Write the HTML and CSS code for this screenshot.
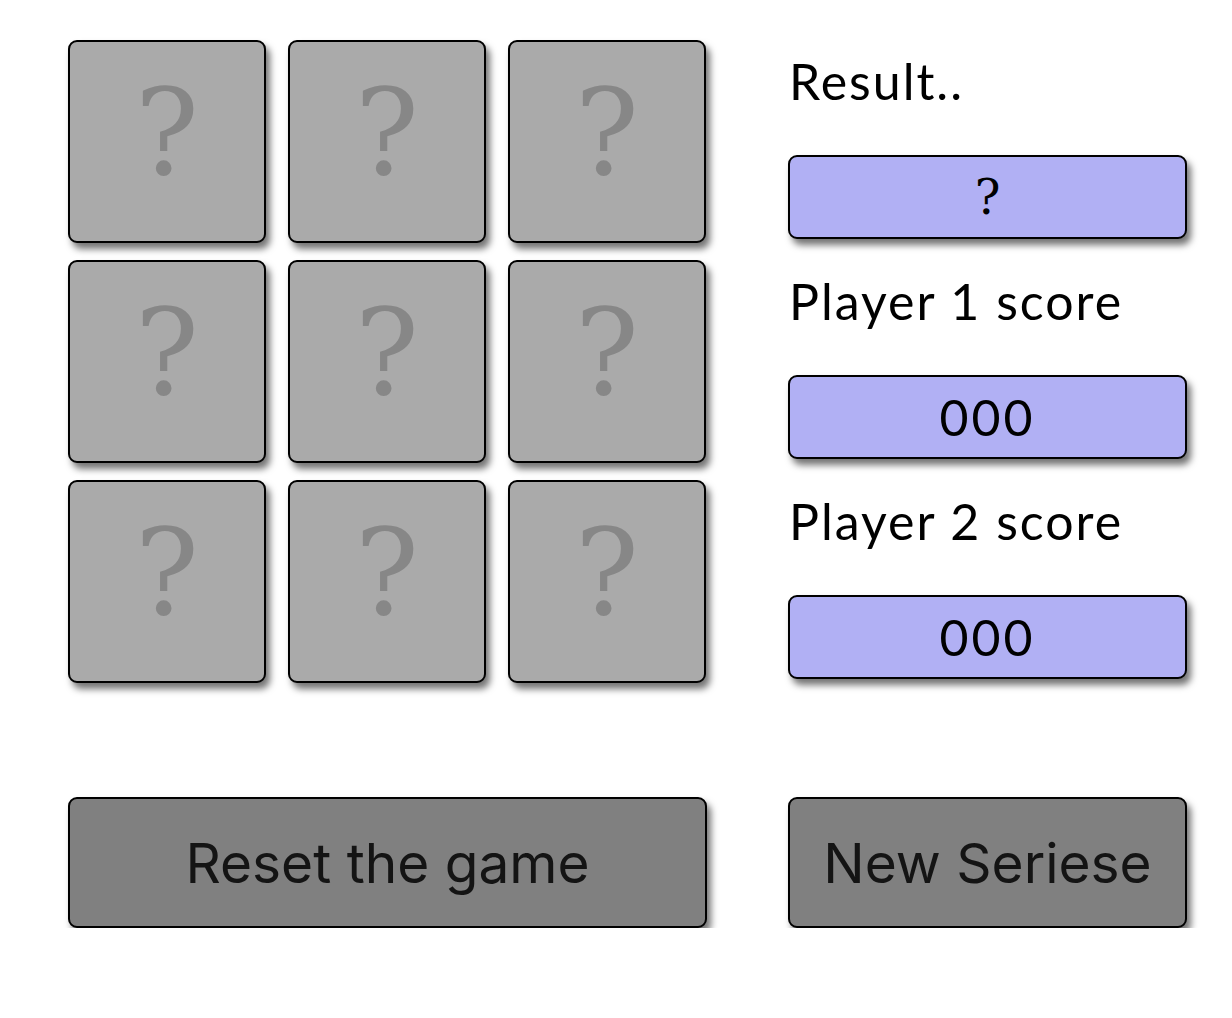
FILE: index.html
```html
<!DOCTYPE html>
<html>
<head>
<meta charset="utf-8">
<link rel="stylesheet" href="styles.css">
</head>
<body>
<div class="page">
  <div class="board">
    <div class="cell">?</div>
    <div class="cell">?</div>
    <div class="cell">?</div>
    <div class="cell">?</div>
    <div class="cell">?</div>
    <div class="cell">?</div>
    <div class="cell">?</div>
    <div class="cell">?</div>
    <div class="cell">?</div>
  </div>
  <div class="side">
    <div class="group">
      <div class="label">Result..</div>
      <div class="box result">?</div>
    </div>
    <div class="group">
      <div class="label">Player 1 score</div>
      <div class="box score">000</div>
    </div>
    <div class="group">
      <div class="label">Player 2 score</div>
      <div class="box score">000</div>
    </div>
  </div>
  <button class="btn reset">Reset the game</button>
  <button class="btn series">New Seriese</button>
</div>
</body>
</html>
```
FILE: styles.css
```css
html, body {
  margin: 0;
  padding: 0;
  background: #ffffff;
}

.page {
  display: grid;
  grid-template-columns: 640px 400px;
  column-gap: 80px;
  row-gap: 114px;
  padding: 40px 0 0 68px;
  align-items: start;
}

.board {
  display: grid;
  grid-template-columns: repeat(3, 198px);
  grid-auto-rows: 203px;
  column-gap: 22px;
  row-gap: 17px;
}

.cell {
  box-sizing: border-box;
  background: #aaaaaa;
  border: 2px solid #000;
  border-radius: 9px;
  box-shadow: 4px 6px 7px rgba(0, 0, 0, 0.55);
  color: #878787;
  font-family: "DejaVu Serif", serif;
  font-size: 120px;
  line-height: 1;
  display: flex;
  align-items: center;
  justify-content: center;
  padding-bottom: 18px;
}

.side {
  display: flex;
  flex-direction: column;
  gap: 21px;
}

.group {
  display: flex;
  flex-direction: column;
}

.label {
  height: 115px;
  box-sizing: border-box;
  padding-top: 13px;
  padding-left: 1px;
  font-family: Lato, "Noto Sans", sans-serif;
  font-size: 50px;
  letter-spacing: 2px;
  line-height: 57px;
  color: #000;
}

.box {
  box-sizing: border-box;
  width: 399px;
  height: 84px;
  background: #b1b0f4;
  border: 2px solid #000;
  border-radius: 9px;
  box-shadow: 4px 6px 7px rgba(0, 0, 0, 0.55);
  display: flex;
  align-items: center;
  justify-content: center;
  color: #000;
}

.result {
  font-family: "DejaVu Serif", serif;
  font-size: 48px;
}

.score {
  font-family: Lato, "Noto Sans", sans-serif;
  font-size: 50px;
  letter-spacing: 3px;
}

.btn {
  box-sizing: border-box;
  height: 131px;
  background: #808080;
  border: 2px solid #000;
  border-radius: 9px;
  box-shadow: 4px 6px 7px rgba(0, 0, 0, 0.55);
  color: #141414;
  font-family: Inter, Roboto, sans-serif;
  font-size: 55px;
  padding: 0;
  cursor: pointer;
}

.reset {
  width: 639px;
}

.series {
  width: 399px;
}
```
